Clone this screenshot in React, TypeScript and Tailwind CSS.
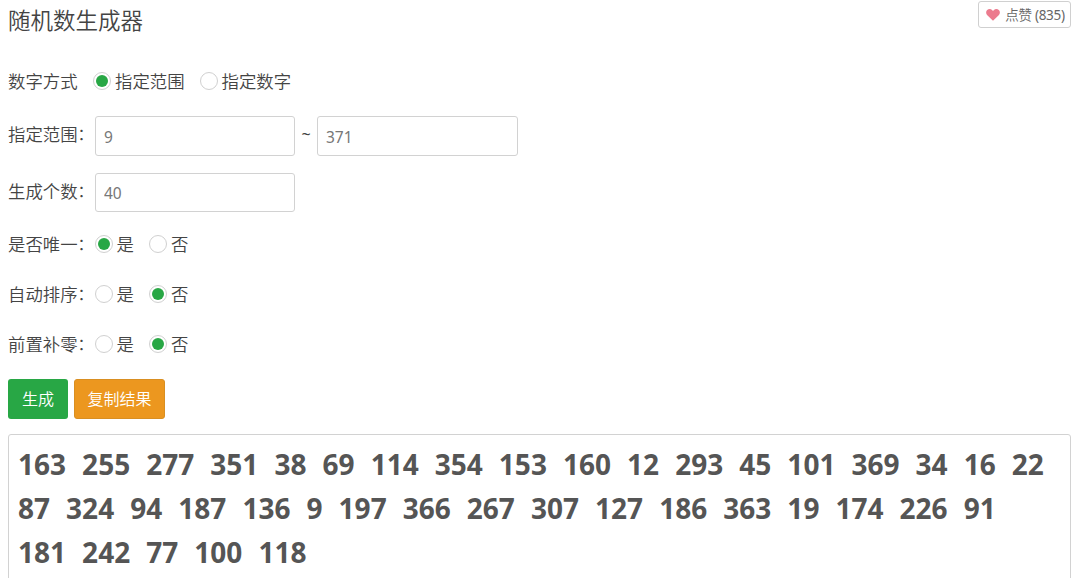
import React from 'react'

const RESULT_ROWS = [
  [163, 255, 277, 351, 38, 69, 114, 354, 153, 160, 12, 293, 45, 101, 369, 34, 16, 22],
  [87, 324, 94, 187, 136, 9, 197, 366, 267, 307, 127, 186, 363, 19, 174, 226, 91],
  [181, 242, 77, 100, 118],
]

const HeartSvg = () => (
  <svg width="14" height="12" viewBox="0 0 14 12" fill="#ec7b8e">
    <path d="M7 11.8 1.3 6.3C-.3 4.7-.2 2.2 1.2 1 2.7-.4 5-.1 6.3 1.2L7 2l.7-.8C9-.1 11.3-.4 12.8 1c1.4 1.2 1.5 3.7-.1 5.3L7 11.8Z" />
  </svg>
)

const FieldLabel = ({ text }: { text: string }) => (
  <span className="flex w-[87px] shrink-0">
    <span>{text}</span>
    <span className="text-base">：</span>
  </span>
)

const Radio = ({ label, checked }: { label: string; checked?: boolean }) => (
  <label className="flex items-center gap-1">
    <span className="flex size-[18px] items-center justify-center rounded-full border border-[#d0d0d0] bg-white">
      {checked && <span className="size-3 rounded-full bg-[#28a745]" />}
    </span>
    <span>{label}</span>
  </label>
)

const YesNoRow = ({ label, yes }: { label: string; yes?: boolean }) => (
  <div className="flex h-[50px] items-center">
    <FieldLabel text={label} />
    <div className="-ml-[0.5px] flex items-center gap-[15px]">
      <Radio label="是" checked={yes} />
      <Radio label="否" checked={!yes} />
    </div>
  </div>
)

const NumberInput = ({ value, className }: { value: string; className: string }) => (
  <input
    className={`rounded-[3px] border border-[#d2d2d2] bg-white px-2 pt-px text-[15.5px] font-normal text-[#777] outline-none ${className}`}
    defaultValue={value}
  />
)

export default function App() {
  return (
    <div className="h-[578px] w-[1080px] overflow-hidden bg-white pr-[9px] pl-2 font-['Noto_Sans','Noto_Sans_CJK_SC',sans-serif] text-[17.4px] leading-6 font-[350] whitespace-nowrap text-[#444]">
      <div className="flex h-[56px] items-start justify-between">
        <h1 className="pt-1.5 text-[22.5px] leading-[30px]">随机数生成器</h1>
        <button className="mt-px flex h-[27px] w-[93px] items-center justify-center gap-[5px] rounded-[3px] border border-[#d0d0d0] pl-0.5 text-[13.5px] tracking-[-0.3px] text-[#666]">
          <HeartSvg />
          <span>
            点赞 <span className="font-normal">(835)</span>
          </span>
        </button>
      </div>

      <div className="flex h-[50px] items-center">
        <span className="w-[85px]">数字方式</span>
        <div className="flex items-center gap-[15px]">
          <Radio label="指定范围" checked />
          <Radio label="指定数字" />
        </div>
      </div>

      <div className="mt-2.5 flex h-10 items-center">
        <div className="-mt-1 flex">
          <FieldLabel text="指定范围" />
        </div>
        <NumberInput value="9" className="h-10 w-[200px]" />
        <span className="-mt-1 w-[22px] text-center text-base font-normal">~</span>
        <NumberInput value="371" className="h-10 w-[201px]" />
      </div>
      <div className="mt-[17px] flex h-[39px] items-center">
        <div className="-mt-1 flex">
          <FieldLabel text="生成个数" />
        </div>
        <NumberInput value="40" className="h-[39px] w-[200px]" />
      </div>

      <div className="mt-[7px]">
        <YesNoRow label="是否唯一" yes />
        <YesNoRow label="自动排序" />
        <YesNoRow label="前置补零" />
      </div>

      <div className="mt-[10px] flex gap-1.5 text-base text-white">
        <button className="h-10 w-[60px] rounded-[3px] bg-[#28a745]">生成</button>
        <button className="h-10 w-[91px] rounded-[3px] border border-[#d98f22] bg-[#ec971f]">
          复制结果
        </button>
      </div>

      <div className="mt-[15px] h-[200px] rounded-[3px] border border-[#d2d2d2] pt-[7px] pl-[9px] text-[28px] leading-[44px] font-bold text-[#555]">
        {RESULT_ROWS.map((row, i) => (
          <div key={i} className="flex gap-[16.05px]">
            {row.map((n) => (
              <span key={n}>{n}</span>
            ))}
          </div>
        ))}
      </div>
    </div>
  )
}
